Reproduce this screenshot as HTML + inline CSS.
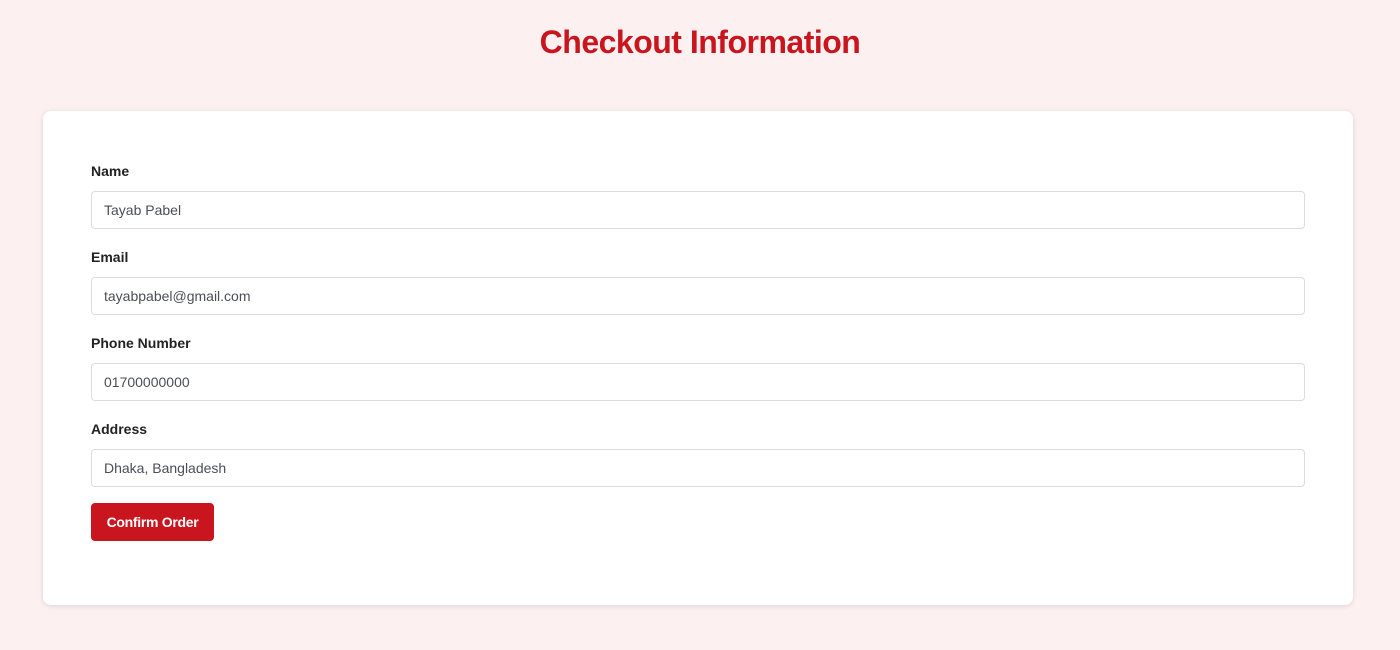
<!DOCTYPE html>
<html><head><meta charset="utf-8"><style>
*{box-sizing:border-box;margin:0;padding:0}
body{width:1400px;height:650px;background:#fcf1f0;font-family:"Liberation Sans",sans-serif;position:relative;overflow:hidden}
h1{position:absolute;top:24px;left:0;width:1400px;text-align:center;color:#c9151e;font-size:32px;font-weight:bold;letter-spacing:-0.5px}
.card{position:absolute;left:43px;top:111px;width:1310px;height:494px;background:#fff;border-radius:8px;box-shadow:0 1px 6px rgba(0,0,0,0.12)}
.lbl{position:absolute;left:48px;font-size:14px;font-weight:bold;color:#222}
.inp{position:absolute;left:48px;width:1214px;height:38px;border:1px solid #dcdcdc;border-radius:4px;padding:0 12px;line-height:36px;font-size:14px;color:#4a4f57}
.btn{position:absolute;left:48px;top:392px;width:123px;height:38px;background:#c9151e;color:#fff;border-radius:4px;font-size:14px;font-weight:bold;text-align:center;line-height:38px;letter-spacing:-0.3px}
</style></head><body>
<h1>Checkout Information</h1>
<div class="card">
<div class="lbl" style="top:52px">Name</div>
<div class="inp" style="top:80px">Tayab Pabel</div>
<div class="lbl" style="top:138px">Email</div>
<div class="inp" style="top:166px">tayabpabel@gmail.com</div>
<div class="lbl" style="top:224px">Phone Number</div>
<div class="inp" style="top:252px">01700000000</div>
<div class="lbl" style="top:310px">Address</div>
<div class="inp" style="top:338px">Dhaka, Bangladesh</div>
<div class="btn">Confirm Order</div>
</div>
</body></html>
